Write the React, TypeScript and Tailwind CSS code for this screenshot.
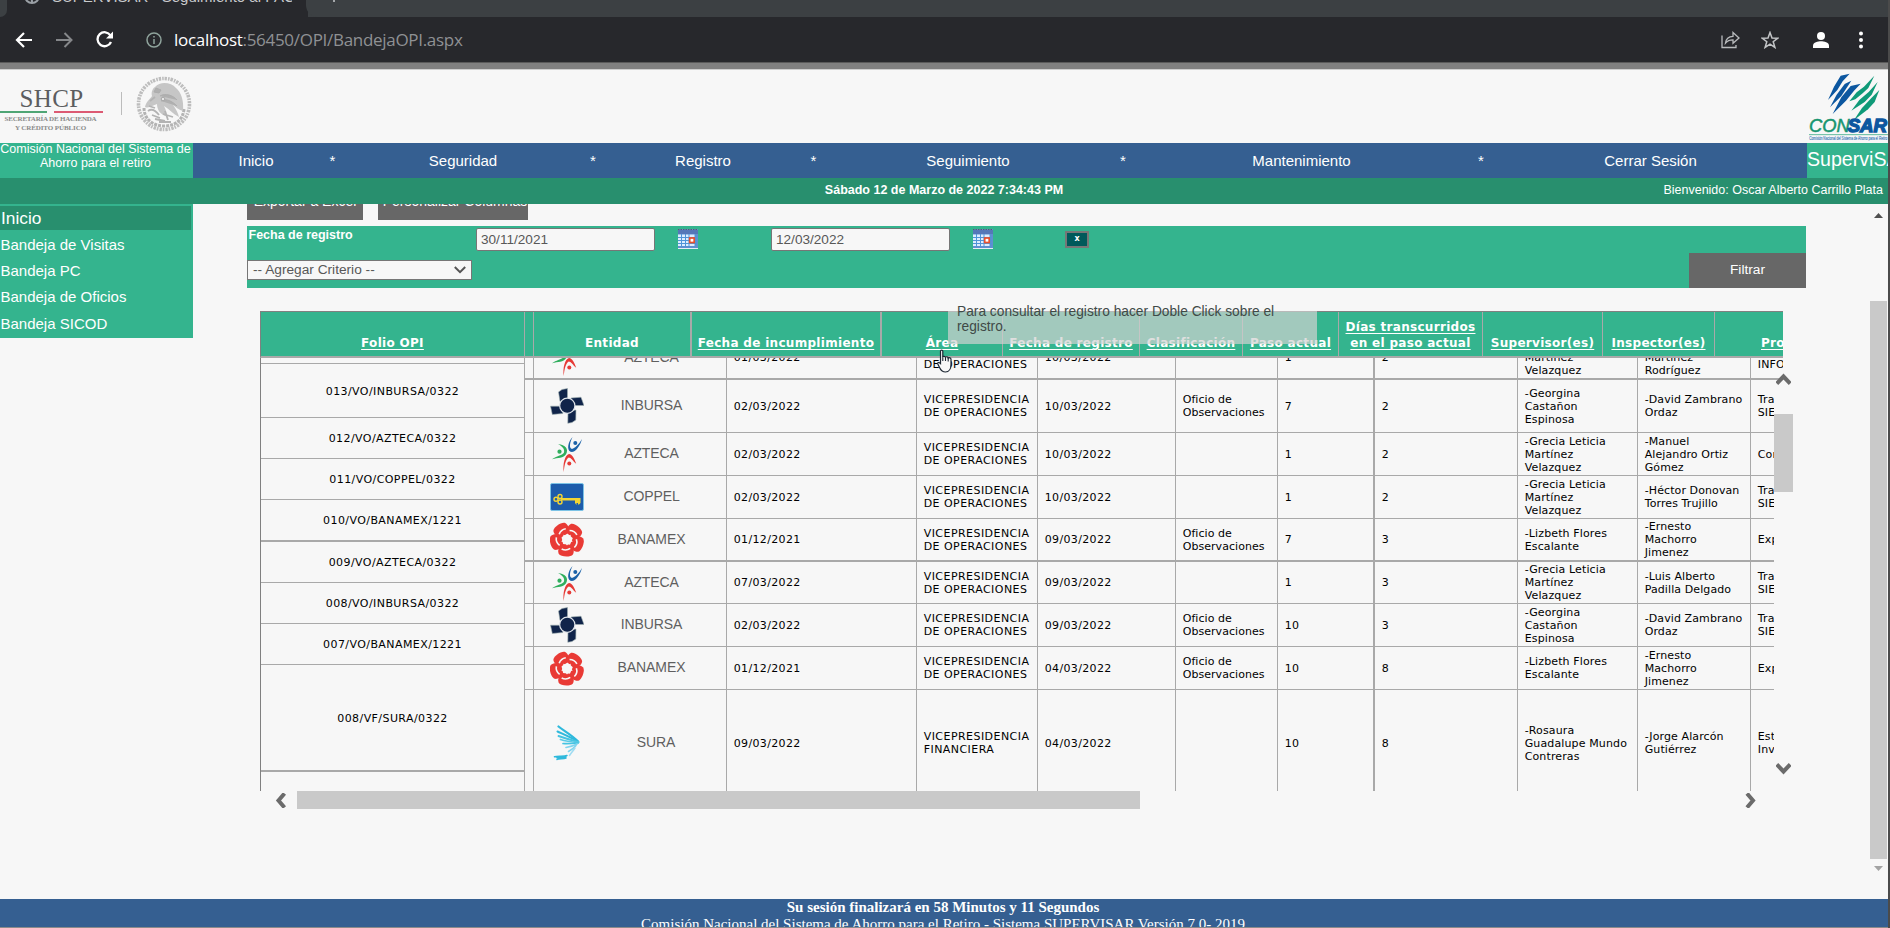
import type { ReactNode } from "react";

const ARIAL = "font-['Liberation_Sans',Arial,sans-serif]";
const VERDANA = "font-['DejaVu_Sans',Verdana,sans-serif]";

/* ---------- Logos ---------- */

function Inbursa() {
  return (
    <svg width="34" height="36" viewBox="0 0 34 36" className="block">
      <g fill="#10244a" stroke="#9fb0b0" strokeWidth="0.6">
        <path d="M8.500 4 L12 1.500 L17.500 0.500 V12 L10 13.500 Z" />
        <path d="M21 10 L31 9.200 L34 17.500 L24.500 17.500 L21 13 Z" />
        <path d="M18 23 L26 22 L25.800 32 L22 34.500 L17.800 35.300 Z" />
        <path d="M0.500 18.200 L11 18.200 L13 25.500 L2.300 26.500 Z" />
      </g>
      <circle cx="17.300" cy="17.700" r="7.600" fill="#10244a" stroke="#dfe4ea" strokeWidth="1.200" />
    </svg>
  );
}

function Azteca() {
  return (
    <svg width="34" height="36" viewBox="0 0 34 36" className="block" fill="none">
      <path d="M22.500 1 C18 6 16.500 13.500 20.500 15.800 C25 17 30 10.500 32 3 C28.500 9 23.500 13.500 21.300 12.800 C19 11.500 20 6 22.500 1 Z" fill="#1b62a8" />
      <circle cx="25.300" cy="7" r="2" fill="#1b62a8" />
      <path d="M8 8 C15.500 8.500 19 13.500 16 18.300 C13.500 22.500 8 21.500 2 23.200 C7.500 19.500 12.500 19.500 14 16.500 C15 13 12 10 8 8 Z" fill="#2fae5d" />
      <circle cx="9.500" cy="15.700" r="2.100" fill="#2fae5d" />
      <path d="M13.800 36 C12.500 28 15 19 19 18 C22.500 18.500 24.500 23 26.200 27.800 C23 25 20.800 21.500 18.800 21.500 C15.800 23 14.300 29 13.800 36 Z" fill="#e63a36" />
      <circle cx="19.300" cy="27.500" r="2" fill="#e63a36" />
    </svg>
  );
}

function Coppel() {
  return (
    <svg width="34" height="28" viewBox="0 0 34 28" className="block">
      <rect x="0.500" y="0.500" width="33" height="27" rx="1.500" fill="#1d5cab" stroke="#7cc3e6" />
      <g fill="none" stroke="#f3d533" strokeWidth="1.400">
        <circle cx="6" cy="16.200" r="2" />
        <circle cx="10" cy="13.500" r="2" />
        <circle cx="10" cy="19" r="2" />
      </g>
      <path d="M11 15 H30.500 V20 L29 21.500 H28 V20 H26.500 V22 L25 20 V17.500 H11 Z" fill="#f3d533" />
    </svg>
  );
}

function Banamex() {
  return (
    <svg width="34" height="35" viewBox="0 0 34 35" className="block">
      {[0, 72, 144, 216, 288].map((a) => (
        <g key={a} transform={`rotate(${a + 185} 17 17.500)`}>
          <path d="M9.800 3 C12 -0.300 22 -0.500 24 2.500 C25.800 6 24.500 10 21 12.700 H13 C9.500 10.500 8.500 6 9.800 3 Z" fill="#e93a35" />
          <path d="M13 9 C15.500 6.800 19 6.600 21.500 7.600" stroke="#f7f7f7" strokeWidth="1.600" fill="none" />
        </g>
      ))}
      <path d="M17 23.500 L14.800 20.500 L11.300 19.500 L13.500 16.500 L13.300 12.800 L17 14 L20.700 12.800 L20.500 16.500 L22.700 19.500 L19.200 20.500 Z" fill="#f7f7f7" />
    </svg>
  );
}

function Sura() {
  return (
    <svg width="34" height="36" viewBox="0 0 34 36" className="block" fill="none" stroke="#2fb9dc" strokeLinecap="round">
      <path d="M8.500 1.500 C14 6 22 10 28 16.500" strokeWidth="2.200" />
      <path d="M7.500 6.500 C14 9.500 21 12.500 28 16.500" strokeWidth="2" />
      <path d="M8.500 11 C14 13 21 15 28.500 17" strokeWidth="1.900" stroke="#45c4e2" />
      <path d="M10.500 14.500 C16 16.500 22 17 28.500 17.500" strokeWidth="1.800" stroke="#5ccbe6" />
      <path d="M13 18.500 C18 19 23 18.500 28 18" strokeWidth="1.700" stroke="#45c4e2" />
      <path d="M16 22.500 C20 22 24 20.500 27 19" strokeWidth="1.700" stroke="#7fd4ee" />
      <path d="M18.500 26.500 C21 25 24 23 26 20.500" strokeWidth="1.600" stroke="#7fd4ee" />
      <path d="M19.500 30.500 C21 28 23 26 25 23" strokeWidth="1.500" stroke="#9fdcf2" />
      <path d="M4.500 31.800 C8 30.500 13 32 17 30.500 M7 34.500 C9 33 13 34.500 16 33 M7 32.800 L16 31.800" strokeWidth="1.500" />
    </svg>
  );
}

const LOGOS = {
  INBURSA: Inbursa,
  AZTECA: Azteca,
  COPPEL: Coppel,
  BANAMEX: Banamex,
  SURA: Sura,
};

function Seal() {
  return (
    <svg width="58" height="58" viewBox="0 0 58 58" className="block">
      <circle cx="29" cy="29" r="25.500" fill="none" stroke="#bdbdbd" strokeWidth="3.600" strokeDasharray="2.400 1.100 1.600 0.900" />
      <path d="M9 33 C9 44 18 51 29 51 C40 51 48 45 49 34" fill="none" stroke="#b3b3b3" strokeWidth="3" strokeDasharray="3 1" />
      <path d="M20 12 C25 6 36 7 41 13 C46 17 49 25 48 36 C44 35 41 32 38 30 C41 34 43 38 44 42 C38 39 34 34 29 31 C31 35 32 38 31 41 C26 40 22 35 22 29 C18 30 14 34 10 32 C11 27 15 24 17 21 C16 18 17 14 20 12 Z" fill="#c6c6c6" />
      <path d="M21 13 L26 15 L24 18 L19 17 Z M25 21 C30 18 38 20 42 25 M26 26 C31 23 37 26 42 31" fill="#b0b0b0" stroke="#adadad" strokeWidth="1" />
      <path d="M15 26 L20 22 M13 36 C17 33 21 36 24 40 M17 40 L25 43 M28 39 L38 42 M24 47 H36 M14 31 L20 33 M30 36 L33 45 M20 44 L30 46" stroke="#b3b3b3" strokeWidth="1.800" fill="none" />
      <circle cx="28" cy="24" r="1.800" fill="#e6e6e6" stroke="#a6a6a6" />
    </svg>
  );
}

function ConsarLogo() {
  return (
    <svg width="88" height="73" viewBox="0 30 264 219" className="block">
      <g fill="#0c57a0">
        <path d="M122 47 L149 41 L128 64 L112 90 L84 120 L102 80 Z" />
        <path d="M134 72 L154 62 L124 108 L90 142 L110 104 Z" />
        <path d="M152 78 L182 71 L162 92 L138 122 L98 162 L124 112 Z" />
      </g>
      <g fill="#0f9a78">
        <path d="M223 47 L205 84 L188 100 L166 118 L148 124 L170 97 L192 80 Z" />
        <path d="M233 66 L215 104 L194 126 L154 152 L178 120 L206 96 Z" />
        <path d="M238 90 L224 126 L204 148 L162 180 L186 144 L212 116 Z" />
      </g>
      <text x="27" y="217" fontSize="54" fontStyle="italic" fontFamily="Liberation Sans" fill="#17956f" stroke="#17956f" strokeWidth="1.500" textLength="122" lengthAdjust="spacingAndGlyphs">CON</text>
      <text x="143" y="217" fontSize="54" fontStyle="italic" fontWeight="bold" fontFamily="Liberation Sans" fill="#0c57a0" stroke="#0c57a0" strokeWidth="4" textLength="118" lengthAdjust="spacingAndGlyphs">SAR</text>
      <path d="M27 224 H264" stroke="#5fb99c" strokeWidth="3" />
      <text x="28" y="241" fontSize="15" fontFamily="Liberation Sans" fill="#3f7cb8" stroke="#3f7cb8" strokeWidth="0.500" textLength="234" lengthAdjust="spacingAndGlyphs">Comisión Nacional del Sistema de Ahorro para el Retiro</text>
    </svg>
  );
}

function CalendarIcon() {
  return (
    <svg width="20" height="20" viewBox="0 0 20 20" className="block">
      <rect width="20" height="20" fill="#5f8fd0" />
      <path d="M0 0.500 H20" stroke="#55606e" strokeDasharray="1.500 1" />
      <rect y="1" width="20" height="4" fill="#5577b8" />
      <path d="M0 5.500 H17 V17 H0 Z" fill="#dcecff" />
      <path d="M0 8.500 H19 M0 11.500 H19 M0 14.500 H19 M3.500 5 V18 M7.500 5 V18 M11 5 V18 M17 5 V18" stroke="#4f94d8" strokeWidth="1" />
      <rect x="11.700" y="9" width="4.500" height="4.500" fill="#fff" stroke="#e8512e" strokeWidth="1.700" />
      <path d="M0 19.500 H20" stroke="#e8eef6" />
    </svg>
  );
}

function Chevron({ d, w, h }: { d: string; w: number; h: number }) {
  return (
    <svg width={w} height={h} viewBox={`0 0 ${w} ${h}`} className="block" fill="none" stroke="#6b6b6b" strokeWidth="4">
      <path d={d} />
    </svg>
  );
}

/* ---------- Browser chrome ---------- */

function BrowserBar() {
  return (
    <header className="shrink-0">
      <div className="flex h-[17px] overflow-hidden bg-[#3c4043]">
        <div className="flex h-[17px] w-[308px] overflow-hidden bg-[#27282c]">
          <div className="h-[17px] w-[7px] rounded-br-lg bg-[#3c4043]" />
          <svg width="18" height="18" viewBox="0 0 18 18" className="-mt-[13px] ml-4 shrink-0" fill="none" stroke="#9aa0a6" strokeWidth="2">
            <circle cx="9" cy="9" r="7" />
            <path d="M3 10 C7 9 9 11 9 15" />
          </svg>
          <span className={`${ARIAL} -mt-[13px] ml-[11px] w-[240px] overflow-hidden whitespace-nowrap text-[15px] leading-5 text-[#c8cacc]`}>
            SUPERVISAR - Seguimiento al PAC
          </span>
        </div>
        <div className="-ml-0.5 h-[17px] grow rounded-bl-xl bg-[#3c4043] pl-[22px]">
          <div className="ml-[5px] h-0.5 w-0.5 bg-[#a5a8ab]" />
        </div>
      </div>
      <div className="flex h-[45px] items-center bg-[#27282c] pr-[28px]">
        <svg width="18" height="18" viewBox="0 0 18 18" className="ml-[15px]" fill="none" stroke="#fff" strokeWidth="2.200">
          <path d="M17 9 H2.500 M9 2 L2 9 L9 16" />
        </svg>
        <svg width="18" height="18" viewBox="0 0 18 18" className="ml-[22px]" fill="none" stroke="#85878a" strokeWidth="2">
          <path d="M1 9 H16 M9.500 2 L16.500 9 L9.500 16" />
        </svg>
        <svg width="19" height="18" viewBox="0 0 19 18" className="ml-[22px]" fill="none" stroke="#fff" strokeWidth="2.300">
          <path d="M15.500 4.500 A7 7 0 1 0 16 11" />
          <path d="M18 0.500 V7.500 H11 Z" fill="#fff" stroke="none" />
        </svg>
        <svg width="16" height="16" viewBox="0 0 16 16" className="ml-8" fill="none" stroke="#8fa39c" strokeWidth="1.500">
          <circle cx="8" cy="8" r="7" />
          <path d="M8 7 V12 M8 4 V5.600" />
        </svg>
        <span className="ml-3 whitespace-nowrap font-['Open_Sans',sans-serif] text-[17px] tracking-[-0.3px] text-[#8f9194]">
          <span className="text-white">localhost</span>:56450/OPI/BandejaOPI.aspx
        </span>
        <div className="grow" />
        <svg width="19" height="18" viewBox="0 0 19 18" fill="none" stroke="#b9bbbd" strokeWidth="1.300">
          <path d="M1 4.500 V16.500 H15 V14" />
          <path d="M4.500 12 C5 7.500 8 5.500 12 5.300 V1.500 L18 7 L12 12.300 V8.800 C9 8.800 6.500 9.500 4.500 12 Z" />
        </svg>
        <svg width="18" height="18" viewBox="0 0 18 18" className="ml-[21px]" fill="none" stroke="#c3c5c7" strokeWidth="1.500">
          <path d="M9 1.500 L11 7 L16.800 7.200 L12.200 10.700 L13.900 16.400 L9 13.100 L4.100 16.400 L5.800 10.700 L1.200 7.200 L7 7 Z" />
        </svg>
        <svg width="18" height="18" viewBox="0 0 18 18" className="ml-[33px]" fill="#fff">
          <circle cx="9" cy="5" r="4" />
          <path d="M1 17 V14.500 C1 11.500 6 10.300 9 10.300 C12 10.300 17 11.500 17 14.500 V17 Z" />
        </svg>
        <svg width="4" height="18" viewBox="0 0 4 18" className="ml-[29px] -mr-[3px]" fill="#fff">
          <circle cx="2" cy="2.500" r="2" />
          <circle cx="2" cy="9" r="2" />
          <circle cx="2" cy="15.500" r="2" />
        </svg>
      </div>
      <div className="h-2 border-b border-t border-b-[#cfcfcf] border-t-[#5a5a5a] bg-[#808080]" />
    </header>
  );
}

/* ---------- Page header ---------- */

function Logos() {
  return (
    <div className="flex h-[73px] shrink-0 justify-between">
      <div className="flex">
        <div className="flex w-[103px] flex-col items-center pt-[15px] font-['Liberation_Serif',serif]">
          <div className="h-[25px] text-[25px] leading-[28px] tracking-[0.4px] text-[#5c5d60]">SHCP</div>
          <div className="mt-px flex h-0.5 w-full justify-between">
            <div className="w-[47px] bg-[#4fa575]" />
            <div className="w-[49px] bg-[#dc5a73]" />
          </div>
          <div className="mt-0.5 -ml-0.5 whitespace-nowrap text-[7px] font-bold leading-[9px] tracking-[-0.2px] text-[#8a8a8a]">SECRETARÍA DE HACIENDA</div>
          <div className="-ml-0.5 whitespace-nowrap text-[7px] font-bold leading-[8px] tracking-[-0.1px] text-[#8a8a8a]">Y CRÉDITO PÚBLICO</div>
        </div>
        <div className="ml-[18px] mt-[22px] h-[23px] w-px bg-[#bcbcbc]" />
        <div className="ml-[13px] mt-[5px]">
          <Seal />
        </div>
      </div>
      <ConsarLogo />
    </div>
  );
}

function MenuItem({ w, children }: { w: string; children: ReactNode }) {
  return <div className={`${w} shrink-0 text-center`}>{children}</div>;
}

function MenuBar() {
  return (
    <div className={`${ARIAL} flex h-[35px] shrink-0 bg-[#355f91] text-white`}>
      <div className="w-[193px] shrink-0 bg-[#34b48e] text-center text-[12.500px] leading-[14px]">
        <div className="-mt-px -ml-0.5 whitespace-nowrap">Comisión Nacional del Sistema de</div>
        <div className="-ml-0.5">Ahorro para el retiro</div>
      </div>
      <nav className="flex w-[1614px] shrink-0 text-[15px] leading-[35px]">
        <MenuItem w="w-[126px]">Inicio</MenuItem>
        <MenuItem w="w-[27px]">*</MenuItem>
        <MenuItem w="w-[234px]">Seguridad</MenuItem>
        <MenuItem w="w-[26px]">*</MenuItem>
        <MenuItem w="w-[194px]">Registro</MenuItem>
        <MenuItem w="w-[27px]">*</MenuItem>
        <MenuItem w="w-[282px]">Seguimiento</MenuItem>
        <MenuItem w="w-[28px]">*</MenuItem>
        <MenuItem w="w-[329px]">Mantenimiento</MenuItem>
        <MenuItem w="w-[30px]">*</MenuItem>
        <MenuItem w="w-[309px]">Cerrar Sesión</MenuItem>
      </nav>
      <div className="w-[81px] overflow-hidden bg-[#34b48e] text-[19.600px] leading-[32px]">SuperviSAR</div>
    </div>
  );
}

function StatusBar() {
  return (
    <div className={`${ARIAL} grid h-[26px] shrink-0 grid-cols-3 bg-[#288f6e] text-[12.500px] leading-[24px] text-white`}>
      <div />
      <div className="text-center font-bold">Sábado 12 de Marzo de 2022 7:34:43 PM</div>
      <div className="pr-[5px] text-right">Bienvenido: Oscar Alberto Carrillo Plata</div>
    </div>
  );
}

function Sidebar() {
  return (
    <aside className={`${ARIAL} h-[134px] w-[193px] shrink-0 bg-[#34b48e] pt-0.5 text-[15px] leading-[26.400px] text-white`}>
      <div className="mb-[1.500px] h-6 w-[191px] bg-[#288f6e] pl-px text-[17.300px] leading-6">Inicio</div>
      {["Bandeja de Visitas", "Bandeja PC", "Bandeja de Oficios", "Bandeja SICOD"].map((t) => (
        <div key={t} className="pl-[0.500px]">{t}</div>
      ))}
    </aside>
  );
}

/* ---------- Filter panel ---------- */

function DateField({ value }: { value: string }) {
  return (
    <div className="h-[23px] w-[179px] shrink-0 rounded-[2px] border border-[#767676] bg-[#f7f7f7] pl-1 text-[13.600px] leading-[21px] text-[#585858]">
      {value}
    </div>
  );
}

function FilterPanel() {
  return (
    <div className={`${ARIAL} flex h-[62px] justify-between bg-[#34b48e]`}>
      <div>
        <div className="flex h-[34px] pt-0.5">
          <div className="w-[229px] shrink-0 pl-[1.500px] text-[12.500px] font-bold leading-[14px] text-white">Fecha de registro</div>
          <DateField value="30/11/2021" />
          <div className="ml-[23px] mt-px">
            <CalendarIcon />
          </div>
          <div className="w-[73px]" />
          <DateField value="12/03/2022" />
          <div className="ml-[23px] mt-px">
            <CalendarIcon />
          </div>
          <div className={`${VERDANA} ml-[72px] mt-[3px] h-[17px] w-6 border-2 border-[#767676] bg-[#00595a] text-center text-[8px] font-bold leading-[12px] text-white`}>
            x
          </div>
        </div>
        <div className="flex h-5 w-[225px] items-center justify-between border border-[#767676] bg-[#f7f7f7] pl-[5px] pr-[5px] text-[13.700px] text-[#585858]">
          <span className="pt-px">-- Agregar Criterio --</span>
          <svg width="12" height="8" viewBox="0 0 12 8" fill="none" stroke="#555" strokeWidth="2">
            <path d="M0.800 1 L6 6.200 L11.200 1" />
          </svg>
        </div>
      </div>
      <div className="mt-[27px] h-[35px] w-[117px] bg-[#676767] text-center text-[13.700px] leading-[34px] text-white">Filtrar</div>
    </div>
  );
}

/* ---------- Grid ---------- */

const FOLIOS: [string, string][] = [
  ["", "h-[6px] border-b"],
  ["013/VO/INBURSA/0322", "h-[54px] border-b"],
  ["012/VO/AZTECA/0322", "h-[41px] border-b"],
  ["011/VO/COPPEL/0322", "h-[41px] border-b"],
  ["010/VO/BANAMEX/1221", "h-[42px] border-b-2"],
  ["009/VO/AZTECA/0322", "h-[41px] border-b"],
  ["008/VO/INBURSA/0322", "h-[41px] border-b"],
  ["007/VO/BANAMEX/1221", "h-[41px] border-b"],
  ["008/VF/SURA/0322", "h-[107px] border-b-2"],
  ["", "h-[20px]"],
];

type Row = {
  h: string;
  ent: keyof typeof LOGOS;
  inc: string;
  area: string;
  reg: string;
  cls: string[];
  paso: string;
  dias: string;
  sup: string[];
  ins: string[];
  proc: string[];
};

const OPS = "DE OPERACIONES";
const GLM = ["-Grecia Leticia", "Martínez", "Velazquez"];
const GCE = ["-Georgina", "Castañon", "Espinosa"];
const LFE = ["-Lizbeth Flores", "Escalante"];
const DZO = ["-David Zambrano", "Ordaz"];
const EMJ = ["-Ernesto", "Machorro", "Jimenez"];
const OBS = ["Oficio de", "Observaciones"];
const TRA = ["Trabajo", "SIEFORE"];

const ROWS: Row[] = [
  { h: "-mt-[21px] h-[43px] border-b-2", ent: "AZTECA", inc: "01/03/2022", area: OPS, reg: "10/03/2022", cls: [], paso: "1", dias: "2", sup: GLM, ins: ["-Laura", "Martínez", "Rodríguez"], proc: ["Registro", "INFORMACIÓN"] },
  { h: "h-[53px] border-b", ent: "INBURSA", inc: "02/03/2022", area: OPS, reg: "10/03/2022", cls: OBS, paso: "7", dias: "2", sup: GCE, ins: DZO, proc: TRA },
  { h: "h-[43px] border-b", ent: "AZTECA", inc: "02/03/2022", area: OPS, reg: "10/03/2022", cls: [], paso: "1", dias: "2", sup: GLM, ins: ["-Manuel", "Alejandro Ortiz", "Gómez"], proc: ["Contable"] },
  { h: "h-[43px] border-b", ent: "COPPEL", inc: "02/03/2022", area: OPS, reg: "10/03/2022", cls: [], paso: "1", dias: "2", sup: GLM, ins: ["-Héctor Donovan", "Torres Trujillo"], proc: TRA },
  { h: "h-[43px] border-b-2", ent: "BANAMEX", inc: "01/12/2021", area: OPS, reg: "09/03/2022", cls: OBS, paso: "7", dias: "3", sup: LFE, ins: EMJ, proc: ["Expediente"] },
  { h: "h-[42px] border-b", ent: "AZTECA", inc: "07/03/2022", area: OPS, reg: "09/03/2022", cls: [], paso: "1", dias: "3", sup: GLM, ins: ["-Luis Alberto", "Padilla Delgado"], proc: TRA },
  { h: "h-[43px] border-b", ent: "INBURSA", inc: "02/03/2022", area: OPS, reg: "09/03/2022", cls: OBS, paso: "10", dias: "3", sup: GCE, ins: DZO, proc: TRA },
  { h: "h-[43px] border-b", ent: "BANAMEX", inc: "01/12/2021", area: OPS, reg: "04/03/2022", cls: OBS, paso: "10", dias: "8", sup: LFE, ins: EMJ, proc: ["Expediente"] },
  { h: "h-[107px] border-b", ent: "SURA", inc: "09/03/2022", area: "FINANCIERA", reg: "04/03/2022", cls: [], paso: "10", dias: "8", sup: ["-Rosaura", "Guadalupe Mundo", "Contreras"], ins: ["-Jorge Alarcón", "Gutiérrez"], proc: ["Estados", "Inversión"] },
];

function Cell({ w, lines }: { w: string; lines: string[] }) {
  return (
    <div className={`${w} flex shrink-0 flex-col justify-center whitespace-nowrap border-[#a9a9a9] pl-[6.700px]`}>
      {lines.map((l) => (
        <div key={l}>{l}</div>
      ))}
    </div>
  );
}

function DataRow({ r }: { r: Row }) {
  const Logo = LOGOS[r.ent];
  return (
    <div className={`${r.h} flex shrink-0 border-[#a9a9a9]`}>
      <div className="w-[9px] shrink-0 border-r border-[#a9a9a9]" />
      <div className="flex w-[193px] shrink-0 items-center border-r border-[#a9a9a9] pl-4">
        <Logo />
        <span className={`${ARIAL} ${r.ent === "SURA" ? "ml-[22px]" : "ml-[17.500px]"} -mt-px w-[100px] text-center text-[14px] tracking-[-0.1px] text-[#5f5f5f]`}>{r.ent}</span>
      </div>
      <Cell w="w-[190px] border-r tracking-[0.36px]" lines={[r.inc]} />
      <Cell w="w-[121px] border-r tracking-[0.45px]" lines={["VICEPRESIDENCIA", r.area]} />
      <Cell w="w-[138px] border-r tracking-[0.36px]" lines={[r.reg]} />
      <Cell w="w-[102px] border-r tracking-[0.05px]" lines={r.cls} />
      <Cell w="w-[97px] border-r-2 tracking-[0.36px]" lines={[r.paso]} />
      <Cell w="w-[143px] border-r" lines={[r.dias]} />
      <Cell w="w-[120px] border-r tracking-[0.13px]" lines={r.sup} />
      <Cell w="w-[113px] border-r tracking-[0.1px]" lines={r.ins} />
      <Cell w="w-[160px] tracking-[0.2px]" lines={r.proc} />
    </div>
  );
}

const HEADS: [string, string[]][] = [
  ["w-[190px] border-r-2", ["Fecha de incumplimiento"]],
  ["w-[121px] border-r", ["Área"]],
  ["w-[137px] border-r", ["Fecha de registro"]],
  ["w-[103px] border-r", ["Clasificación"]],
  ["w-[96px] border-r", ["Paso actual"]],
  ["w-[144px] border-r", ["Días transcurridos", "en el paso actual"]],
  ["w-[120px] border-r", ["Supervisor(es)"]],
  ["w-[112px] border-r", ["Inspector(es)"]],
];

function GridHeader() {
  const cell = "flex shrink-0 flex-col justify-end whitespace-nowrap border-[#a9a9a9] pb-[5px] leading-4";
  return (
    <div className={`${VERDANA} flex h-[47px] w-[1523px] overflow-hidden border-b-2 border-l border-t border-b-[#a9a9a9] border-l-[#808080] border-t-[#808080] bg-[#34b48e] text-[12px] font-bold tracking-[0.3px] text-white`}>
      <div className={`${cell} w-[264px] items-center border-r`}>
        <span className="underline underline-offset-2">Folio OPI</span>
      </div>
      <div className="w-[9px] shrink-0 border-r border-[#a9a9a9]" />
      <div className={`${cell} w-[158px] items-center border-r-2`}>
        <span>Entidad</span>
      </div>
      {HEADS.map(([w, lines]) => (
        <div key={lines[0]} className={`${cell} ${w} items-center`}>
          {lines.map((l) => (
            <span key={l} className="underline underline-offset-2">{l}</span>
          ))}
        </div>
      ))}
      <div className={`${cell} w-[200px] items-start pl-[46px]`}>
        <span className="underline underline-offset-2">Proceso</span>
      </div>
    </div>
  );
}

function Grid() {
  return (
    <div className="relative ml-[13px] mt-[23px] w-[1533px]">
      <GridHeader />
      <div className={`${VERDANA} flex h-[433px] overflow-hidden text-[11px] leading-[13px] text-black`}>
        <div className="flex w-[265px] shrink-0 flex-col border-l border-r border-l-[#808080] border-r-[#a9a9a9]">
          {FOLIOS.map(([t, c], i) => (
            <div key={i} className={`${c} flex shrink-0 items-center justify-center border-[#a9a9a9] pt-px tracking-[0.42px]`}>
              {t}
            </div>
          ))}
        </div>
        <div className="flex w-[1258px] shrink-0 flex-col overflow-hidden">
          {ROWS.map((r, i) => (
            <DataRow key={i} r={r} />
          ))}
        </div>
      </div>
      <div className="flex h-[18px] items-center">
        <div className="ml-[15px] w-[22px]">
          <Chevron w={12} h={15} d="M9.500 0.500 L3.500 7.500 L9.500 14.500" />
        </div>
        <div className="h-[18px] w-[843px] bg-[#c9c9c9]" />
        <div className="ml-[605px]">
          <Chevron w={12} h={15} d="M2 0.500 L8 7.500 L2 14.500" />
        </div>
      </div>

      {/* vertical scrollbar floating over the grid's right edge */}
      <div className="absolute left-[1514px] top-[69px] h-[411px] w-[19px] bg-[#f7f7f7]">
        <div className="mt-[34px] h-[78px] bg-[#c9c9c9]" />
      </div>
      <div className="absolute left-[1516px] top-[62px]">
        <Chevron w={15} h={12} d="M0.800 10.500 L7.500 3.500 L14.200 10.500" />
      </div>
      <div className="absolute left-[1516px] top-[452px]">
        <Chevron w={15} h={12} d="M0.800 1.500 L7.500 8.500 L14.200 1.500" />
      </div>

      {/* tooltip */}
      <div className="absolute left-[688px] top-0 h-[33px] w-[369px] bg-[#d2d2d2]/70" />
      <div className={`${ARIAL} absolute left-[697px] top-[-7px] whitespace-nowrap text-[13.750px] leading-[15px] text-[#3f4a47]`}>
        Para consultar el registro hacer Doble Click sobre el
        <br />
        registro.
      </div>

      {/* pointer */}
      <svg width="17" height="24" viewBox="0 0 17 24" className="absolute left-[677px] top-[38px]">
        <path
          d="M3.500 2 C3.500 0.700 5.800 0.700 5.800 2 V8 C6 7 8.300 7 8.500 8.300 C9 7.400 11 7.600 11.200 9 C12 8.300 14 8.800 14 10.300 V15.500 C14 19.500 12 23 8.500 23 C5.500 23 4 21.500 2.800 19 L0.800 15 C0.300 13.500 1.800 12.800 3.500 14.500 Z"
          fill="#f7f7f7"
          stroke="#1d2733"
          strokeWidth="1.200"
        />
        <path d="M5.800 7.500 V12 M8.500 8.500 V12 M11.200 9 V12.500" stroke="#1d2733" strokeWidth="1.100" fill="none" />
      </svg>
    </div>
  );
}

function ActionButtons() {
  const b = "h-10 -mt-[24px] shrink-0 overflow-hidden whitespace-nowrap bg-[#676767] text-center text-[14px] leading-[43px] text-white";
  return (
    <div className={`${ARIAL} flex h-4 gap-[15px] overflow-hidden`}>
      <div className={`${b} w-[116px]`}>Exportar a Excel</div>
      <div className={`${b} w-[150px] pl-1`}>Personalizar Columnas</div>
    </div>
  );
}

function PageScrollbar() {
  return (
    <div className="ml-auto mr-px flex w-[17px] flex-col items-center pt-[9px]">
      <svg width="9" height="5" viewBox="0 0 9 5" className="shrink-0">
        <path d="M0 5 L4.500 0 L9 5 Z" fill="#505050" />
      </svg>
      <div className="mt-[83px] h-[558px] w-[17px] shrink-0 bg-[#c9c9c9]" />
      <svg width="9" height="5" viewBox="0 0 9 5" className="mt-[7px] shrink-0">
        <path d="M0 0 L4.500 5 L9 0 Z" fill="#a3a3a3" />
      </svg>
    </div>
  );
}

export default function App() {
  return (
    <div className="flex h-[928px] w-[1890px] overflow-hidden bg-[#4b4b4b]">
      <div className="flex w-[1888px] shrink-0 flex-col bg-[#f7f7f7]">
        <BrowserBar />
        <Logos />
        <MenuBar />
        <StatusBar />
        <main className="flex h-[695px] shrink-0 overflow-hidden">
          <Sidebar />
          <section className="ml-[54px] w-[1559px] shrink-0">
            <ActionButtons />
            <div className="h-1.5" />
            <FilterPanel />
            <Grid />
          </section>
          <PageScrollbar />
        </main>
        <footer className="h-[29px] shrink-0 overflow-hidden border-b border-[#8b8b8b] bg-[#355f91] pr-0.5 text-center font-['Liberation_Serif',serif] text-[15px] leading-[17px] text-white">
          <div className="font-bold">Su sesión finalizará en 58 Minutos y 11 Segundos</div>
          <div className="whitespace-nowrap">Comisión Nacional del Sistema de Ahorro para el Retiro - Sistema SUPERVISAR Versión 7.0- 2019</div>
        </footer>
      </div>
    </div>
  );
}
